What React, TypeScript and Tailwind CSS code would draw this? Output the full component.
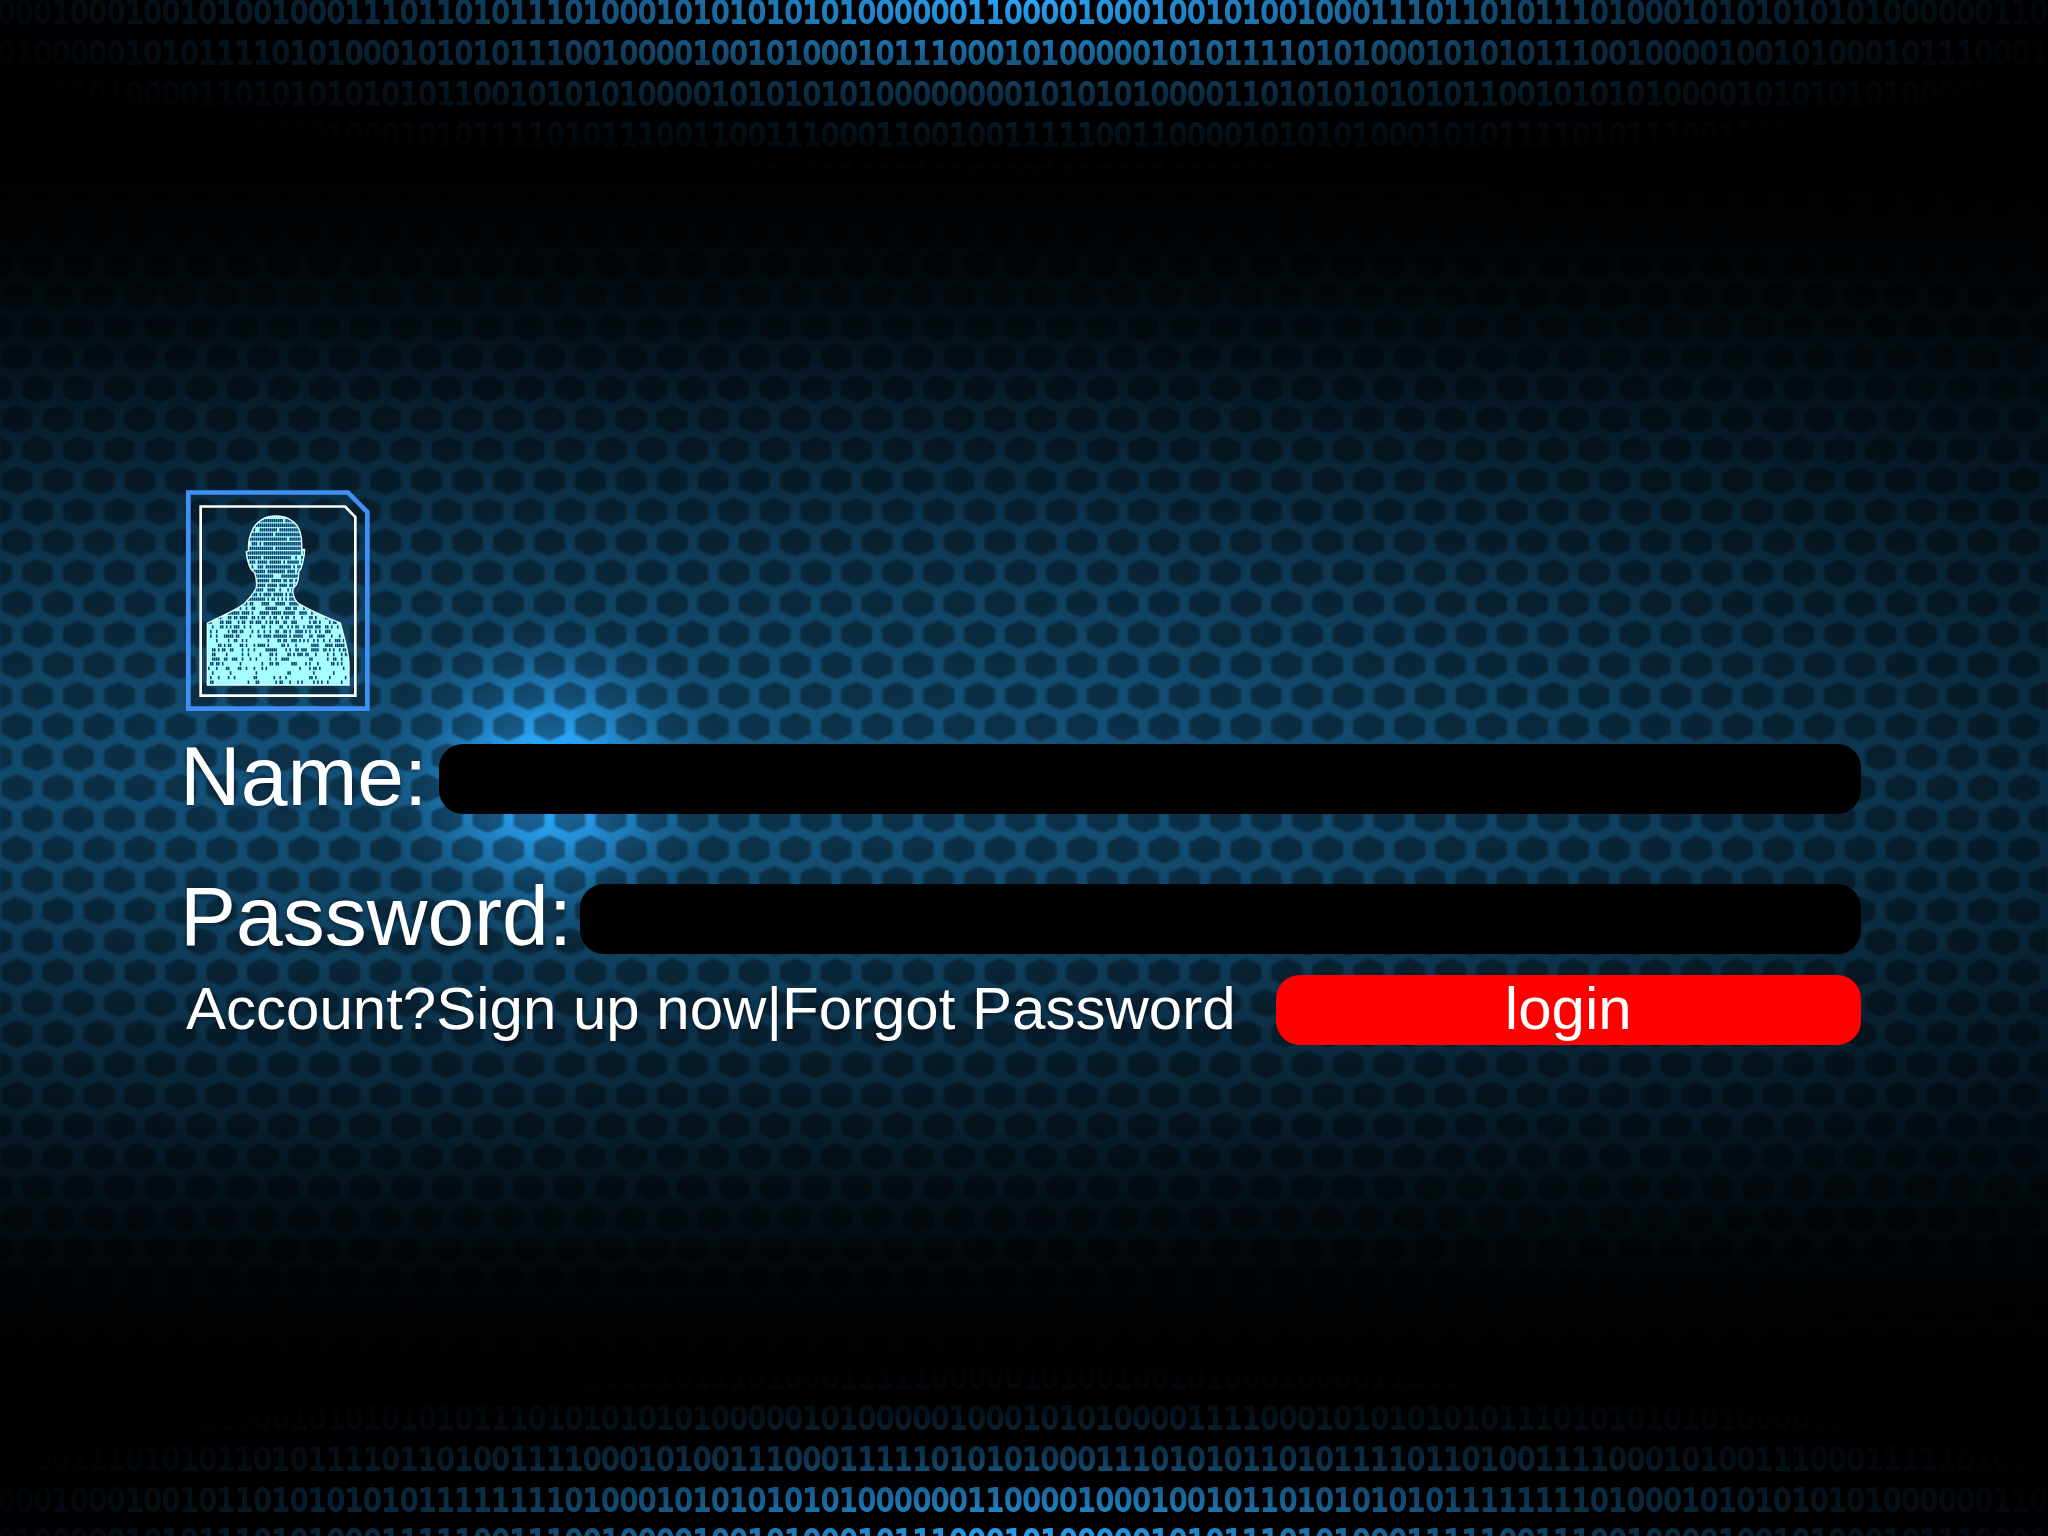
import React from "react";

const TOP_ROWS = [
  "00010001001010010001110110101110100010101010101000000110",
  "01000001010111101010001010101110010000100101000101110001",
  "10101010000110101010101011001010101000010101010100000000",
  "11110011000010101010001010111101011100110011100011001001",
  "01110101001010101010001010111101011100110111111000101010",
];

const BOTTOM_ROWS = [
  "10100100101000100001110101011010101010111010001111100000",
  "10101000011110001010101010111010101010100000101000001000",
  "10001110101011010111101101001111000101001110001111101010",
  "00010001001011010101010111111110100010101010101000000110",
  "01000001010111010100011111001110010000100101000101110001",
];

function DigitRows({ rows }: { rows: string[] }) {
  return (
    <>
      {rows.map((row, i) => (
        <p key={i} className="-ml-[3px] h-[41px] whitespace-nowrap">
          {row + row}
        </p>
      ))}
    </>
  );
}

function Honeycomb() {
  return (
    <svg className="absolute inset-0 h-full w-full" aria-hidden="true">
      <defs>
        <filter id="soften" x="0" y="0" width="100%" height="100%">
          <feGaussianBlur stdDeviation="1.1" />
        </filter>
        <pattern
          id="cells"
          x="-3.48"
          y="35.4"
          width="40.96"
          height="61.44"
          patternUnits="userSpaceOnUse"
        >
          <g fill="#000" fillOpacity="0.4">
            {[
              [20.48, 15.36],
              [0, 46.08],
              [40.96, 46.08],
            ].map(([x, y]) => (
              <path
                key={x + "-" + y}
                transform={`translate(${x} ${y})`}
                d="M-2 -13.4Q0 -14.2 2 -13.4L14 -8Q15.4 -7.2 15.4 -5.6V5.6Q15.4 7.2 14 8L2 13.4Q0 14.2 -2 13.4L-14 8Q-15.4 7.2 -15.4 5.6V-5.6Q-15.4 -7.2 -14 -8Z"
              />
            ))}
          </g>
        </pattern>
      </defs>
      <rect width="100%" height="100%" fill="url(#cells)" filter="url(#soften)" />
    </svg>
  );
}

// Dark code marks over the silhouette: packed in the head, thinning towards the chest.
function codeMarks(): string {
  let seed = 7;
  const random = () => {
    seed = (seed * 16807) % 2147483647;
    return seed / 2147483647;
  };
  let d = "";
  for (let row = 0; row < 36; row++) {
    const y = 147 + row * 13.85;
    for (let col = 0; col < 71; col++) {
      const x = 114 + col * 5.95;
      const off = Math.abs(x - 320) / 210;
      let density = 0.93;
      if (row > 7) density = 0.8;
      if (row > 14) density = 0.74 - off * 0.25;
      if (row > 20) density = 0.68 - off * 0.35;
      if (row > 25) density = 0.42 - off * 0.05;
      if (row > 29) density = 0.28;
      if (row > 32) density = 0.18;
      if (random() < density) d += `M${x.toFixed(1)} ${y.toFixed(1)}h4.8v10h-4.8z`;
    }
  }
  return d;
}

const MARKS = codeMarks();
const BODY =
  "M318 138C352 138 380 155 390 185C396 203 396 220 395 238L404 238C404 256 400 268 397 282C395 296 390 302 386 306C387 322 385 334 379 344C372 350 368 354 368 362C370 380 375 393 386 401C425 424 465 441 511 459C516 478 522 500 526 515C533 545 537 560 537 585V645H112V460C150 441 190 424 220 404C236 388 250 372 258 356C261 342 260 325 254 308C246 303 242 300 239 290C232 270 229 258 229 245L236 243C234 222 238 200 245 185C256 155 285 138 318 138Z";

function Avatar() {
  return (
    <svg
      className="ml-1.5 h-[221px] w-[184px]"
      viewBox="48 60 552 663"
      role="img"
      aria-label="User"
    >
      <defs>
        <clipPath id="body">
          <path d={BODY} />
        </clipPath>
      </defs>
      <path d="M55 67.500H534L592 126V716H55Z" fill="none" stroke="#3f90f5" strokeWidth="14" />
      <path d="M92 109.500H525L556 141V677H92Z" fill="none" stroke="#fff" strokeWidth="8" />
      <path d={BODY} fill="#a6ffff" />
      <path d={MARKS} fill="#0d3f6e" clipPath="url(#body)" />
      <path d={BODY} fill="none" stroke="#e4ffff" strokeWidth="4" />
    </svg>
  );
}

export default function App() {
  return (
    <div className="relative isolate flex min-h-screen flex-col overflow-hidden bg-black font-['Liberation_Sans',Arial,sans-serif] text-white">
      <div className="absolute inset-0 -z-10 bg-[radial-gradient(170px_165px_at_550px_778px,#2ba9ff_0%,#2ba9fff0_25%,#2ba9ff88_50%,#2ba9ff30_75%,#2ba9ff00_100%),linear-gradient(to_bottom,#000_11%,#000000ec_16%,#000000cc_21.500%,#000000a4_26%,#00000078_31%,#00000040_38%,#00000014_45%,#00000000_51%,#0000001c_57%,#0000004c_64%,#00000088_71%,#000000c0_77%,#000000ec_83%,#000_89%),radial-gradient(1900px_1900px_at_700px_760px,#155982_0%,#14527a_25%,#104566_45%,#0a2f46_70%,#04141f_100%)]">
        <Honeycomb />
      </div>

      <header
        aria-hidden="true"
        className="h-[203px] overflow-hidden font-['DejaVu_Sans_Condensed','DejaVu_Sans',sans-serif] text-[32px] leading-[41px] text-[#2ba6fa] [-webkit-text-stroke:2px_#2ba6fa] [mask-image:radial-gradient(1180px_182px_at_50%_0,#000_0%,#000000ac_25%,#0000004c_50%,#00000018_74%,#00000004_92%,transparent_100%)]"
      >
        <div className="-mt-2">
          <DigitRows rows={TOP_ROWS} />
        </div>
      </header>

      <main className="flex flex-1 flex-col justify-center pr-[187px] pl-[180px]">
        <form onSubmit={(e) => e.preventDefault()}>
          <Avatar />

          <div className="mt-[33px] flex h-[70px] items-start gap-3">
            <label
              htmlFor="name"
              className="text-[84px] leading-[64px] [text-shadow:0_2px_5px_#0006]"
            >
              Name:
            </label>
            <input
              id="name"
              type="text"
              className="h-[70px] min-w-0 flex-1 rounded-3xl bg-black px-6 text-4xl outline-none"
            />
          </div>

          <div className="mt-[70px] flex h-[70px] items-start gap-2">
            <label
              htmlFor="password"
              className="text-[84px] leading-[64px] [text-shadow:0_2px_5px_#0006]"
            >
              Password:
            </label>
            <input
              id="password"
              type="password"
              className="h-[70px] min-w-0 flex-1 rounded-3xl bg-black px-6 text-4xl outline-none"
            />
          </div>

          <div className="mt-[21px] flex h-[70px] items-start gap-10 pl-1.5 text-[60px] leading-[68px]">
            <p className="whitespace-nowrap [text-shadow:0_2px_5px_#0006]">
              Account?<a href="#signup">Sign up now</a>|<a href="#forgot">Forgot Password</a>
            </p>
            <button type="submit" className="h-[70px] flex-1 rounded-3xl bg-[#ff0000] pb-0.5">
              login
            </button>
          </div>
        </form>
      </main>

      <footer
        aria-hidden="true"
        className="h-[204px] overflow-hidden font-['DejaVu_Sans_Condensed','DejaVu_Sans',sans-serif] text-[32px] leading-[41px] text-[#2ba6fa] [-webkit-text-stroke:2px_#2ba6fa] [mask-image:radial-gradient(1180px_182px_at_50%_103%,#000_0%,#000000ac_25%,#0000004c_50%,#00000018_74%,#00000004_92%,transparent_100%)]"
      >
        <div className="mt-[25px]">
          <DigitRows rows={BOTTOM_ROWS} />
        </div>
      </footer>
    </div>
  );
}
